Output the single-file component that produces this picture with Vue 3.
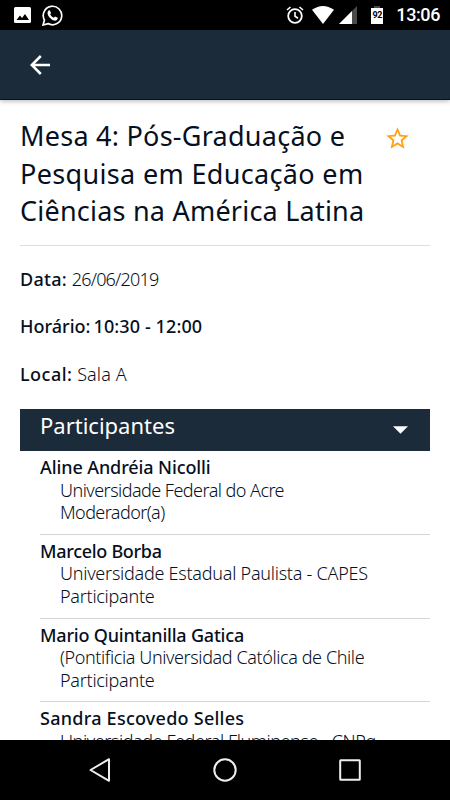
<template>
  <div class="screen">
    <header class="status-bar">
      <div class="status-left">
        <svg class="icon-photo" viewBox="0 0 17 16">
          <rect width="17" height="16" rx="1.5" fill="#fff" />
          <path d="M2.5 13L6 8.5L8 11L11 7L15 13Z" fill="#000" />
        </svg>
        <svg class="icon-phone" viewBox="0 0 20 20">
          <path d="M1 19L2.3 14.3A8.8 8.8 0 1 1 5.7 17.7Z" fill="none" stroke="#fff" stroke-width="1.6" />
          <path d="M6.2 5.3L7.4 5.1L8.6 7.7L7.8 9Q9 11.2 11.3 12.1L12.4 11L15 12.2Q14.9 14.8 12.4 15Q9.4 14.6 6.9 11.6Q4 8 6.2 5.3Z" fill="#fff" />
        </svg>
      </div>
      <div class="status-right">
        <svg class="icon-alarm" viewBox="0 0 18 18">
          <circle cx="9" cy="10" r="6.8" fill="none" stroke="#fff" stroke-width="1.8" />
          <path d="M9 6V10.3L12 12.2M1 4L4.5 1M17 4L13.5 1" fill="none" stroke="#fff" stroke-width="1.6" />
        </svg>
        <svg class="icon-wifi" viewBox="0 0 22 18">
          <path d="M0 3.8Q11 -3.8 22 3.8L11 18Z" fill="#fff" />
        </svg>
        <svg class="icon-signal" viewBox="0 0 18 18">
          <path d="M0 18L18 0V18Z" fill="#4a4a4a" />
          <path d="M0 18L13 5V18Z" fill="#fff" />
        </svg>
        <div class="battery">92</div>
        <span class="clock">13:06</span>
      </div>
    </header>

    <nav class="toolbar">
      <svg class="icon-back" viewBox="0 0 20 20">
        <path d="M20 10H2M10.8 1L1.8 10L10.8 19" fill="none" stroke="#fff" stroke-width="2.5" />
      </svg>
    </nav>

    <main class="content">
      <div class="heading">
        <h1 class="title">
          <span v-for="line in title" :key="line.text" :style="{ letterSpacing: line.spacing }">{{ line.text }}</span>
        </h1>
        <svg class="icon-star" viewBox="0 0 24 24">
          <path d="M22 9.24l-7.19-.62L12 2 9.19 8.63 2 9.24l5.46 4.73L5.82 21 12 17.27 18.18 21l-1.63-7.03L22 9.24zM12 15.4l-3.76 2.27 1-4.28-3.32-2.88 4.38-.38L12 6.1l1.71 4.04 4.38.38-3.32 2.88 1 4.28L12 15.4z" fill="#ffa116" />
        </svg>
      </div>

      <section class="details">
        <p><b class="label-date">Data:</b> <span class="date">26/06/2019</span></p>
        <p><b>Horário:</b> <b class="hours">10:30 - 12:00</b></p>
        <p><b class="label-room">Local:</b> <span class="room">Sala A</span></p>
      </section>

      <section class="panel">
        <div class="panel-header">
          <span>Participantes</span>
          <svg class="icon-caret" viewBox="0 0 16 8"><path d="M0 0H16L8 8Z" fill="#fff" /></svg>
        </div>
        <ul class="people">
          <li v-for="person in people" :key="person.name" class="person">
            <strong :style="{ letterSpacing: person.nameSpacing }">{{ person.name }}</strong>
            <span :style="{ letterSpacing: person.placeSpacing }">{{ person.place }}</span>
            <span v-if="person.role" :style="{ letterSpacing: person.roleSpacing }">{{ person.role }}</span>
          </li>
        </ul>
      </section>
    </main>

    <footer class="nav-bar">
      <svg viewBox="0 0 26 26"><path d="M22 2.2V23.8L3.5 13Z" /></svg>
      <svg viewBox="0 0 26 26"><circle cx="13" cy="13" r="10.7" /></svg>
      <svg viewBox="0 0 26 26"><rect x="3.2" y="3.2" width="19.6" height="19.6" rx="0.5" /></svg>
    </footer>
  </div>
</template>

<script setup>
const title = [
  { text: 'Mesa 4: Pós-Graduação e', spacing: '0.25px' },
  { text: 'Pesquisa em Educação em', spacing: '0.34px' },
  { text: 'Ciências na América Latina', spacing: '0.22px' }
]

const people = [
  {
    name: 'Aline Andréia Nicolli',
    place: 'Universidade Federal do Acre',
    role: 'Moderador(a)',
    nameSpacing: '-0.1px',
    placeSpacing: '-0.54px',
    roleSpacing: '-0.58px'
  },
  {
    name: 'Marcelo Borba',
    place: 'Universidade Estadual Paulista - CAPES',
    role: 'Participante',
    nameSpacing: '-0.3px',
    placeSpacing: '-0.25px',
    roleSpacing: '-0.27px'
  },
  {
    name: 'Mario Quintanilla Gatica',
    place: '(Pontificia Universidad Católica de Chile',
    role: 'Participante',
    nameSpacing: '-0.2px',
    placeSpacing: '-0.4px',
    roleSpacing: '-0.27px'
  },
  {
    name: 'Sandra Escovedo Selles',
    place: 'Universidade Federal Fluminense - CNPq',
    nameSpacing: '0.25px',
    placeSpacing: '-0.42px'
  }
]
</script>

<style>
body {
  margin: 0;
  background: #fff;
}
</style>

<style scoped>
.screen {
  display: flex;
  flex-direction: column;
  width: 450px;
  height: 800px;
  overflow: hidden;
  background: #fff;
  color: #06101e;
  font-family: "Noto Sans", "Open Sans", sans-serif;
}

.status-bar {
  display: flex;
  flex: none;
  align-items: center;
  justify-content: space-between;
  box-sizing: border-box;
  height: 30px;
  padding: 0 10px 0 14px;
  background: #000;
  color: #fff;
}

.status-left,
.status-right {
  display: flex;
  align-items: center;
}

.icon-photo {
  width: 17px;
  height: 16px;
  margin-right: 11px;
}

.icon-phone {
  width: 21px;
  height: 21px;
}

.icon-alarm {
  width: 18px;
  height: 18px;
  margin-right: 8px;
}

.icon-wifi {
  width: 22px;
  height: 18px;
  margin-right: 5px;
}

.icon-signal {
  width: 18px;
  height: 18px;
  margin-right: 14px;
}

.battery {
  display: flex;
  align-items: center;
  justify-content: center;
  box-sizing: border-box;
  width: 12px;
  height: 18px;
  margin-right: 13px;
  padding-top: 1px;
  background: linear-gradient(#4a4a4a, #4a4a4a) top / 6px 2px no-repeat,
    linear-gradient(#fff, #fff) bottom / 12px 16px no-repeat;
  color: #000;
  font: bold 9px/1 Roboto, sans-serif;
  letter-spacing: -0.3px;
}

.clock {
  font: 500 18px/30px Roboto, sans-serif;
  letter-spacing: -0.4px;
}

.toolbar {
  display: flex;
  z-index: 1;
  flex: none;
  align-items: center;
  box-sizing: border-box;
  height: 70px;
  padding-left: 30px;
  border-bottom: 1px solid #07121d;
  background: #1b2b39;
  box-shadow: 0 1px 5px rgba(0, 0, 0, 0.3);
}

.icon-back {
  width: 20px;
  height: 20px;
}

.content {
  flex: 1;
  min-height: 0;
  padding: 17px 20px 0;
  overflow: hidden;
}

.heading {
  display: flex;
  align-items: flex-start;
  justify-content: space-between;
  height: 128px;
  border-bottom: 1px solid #dedede;
}

.title {
  margin: 0;
  font-size: 27px;
  font-weight: 400;
  line-height: 37.5px;
}

.title span {
  display: block;
  white-space: nowrap;
}

.icon-star {
  flex: none;
  width: 27px;
  height: 27px;
  margin: 8px 19.5px 0 0;
}

.details {
  height: 163px;
  padding-top: 10px;
  box-sizing: border-box;
}

.details p {
  margin: 0;
  font-size: 18px;
  font-weight: 300;
  line-height: 47.4px;
  white-space: nowrap;
}

.details b {
  font-weight: 500;
}

.details .label-date {
  letter-spacing: 0.3px;
}

.details .label-room {
  letter-spacing: 0.5px;
}

.date {
  letter-spacing: -0.8px;
}

.hours {
  margin-left: -1.5px;
  letter-spacing: 0.1px;
}

.room {
  letter-spacing: 0.1px;
}

.panel-header {
  display: flex;
  align-items: center;
  justify-content: space-between;
  box-sizing: border-box;
  height: 42px;
  padding: 0 22px 0 20px;
  background: #1b2b39;
  color: #fff;
  font-size: 22px;
  line-height: 32px;
}

.panel-header span {
  align-self: flex-start;
}

.icon-caret {
  width: 15px;
  height: 8px;
}

.people {
  margin: 0;
  padding: 0 0 0 20px;
  list-style: none;
}

.person {
  display: flex;
  flex-direction: column;
  box-sizing: border-box;
  height: 83.75px;
  padding-top: 5px;
  border-bottom: 1px solid #d5d5d5;
  font-size: 18px;
  line-height: 22.5px;
  white-space: nowrap;
}

.person strong {
  font-weight: 500;
}

.person span {
  padding-left: 20px;
  font-weight: 300;
}

.nav-bar {
  display: flex;
  flex: none;
  align-items: center;
  justify-content: center;
  gap: 99px;
  height: 60px;
  background: #000;
}

.nav-bar svg {
  width: 26px;
  height: 26px;
  fill: none;
  stroke: #eee;
  stroke-width: 2;
  stroke-linejoin: round;
}
</style>
